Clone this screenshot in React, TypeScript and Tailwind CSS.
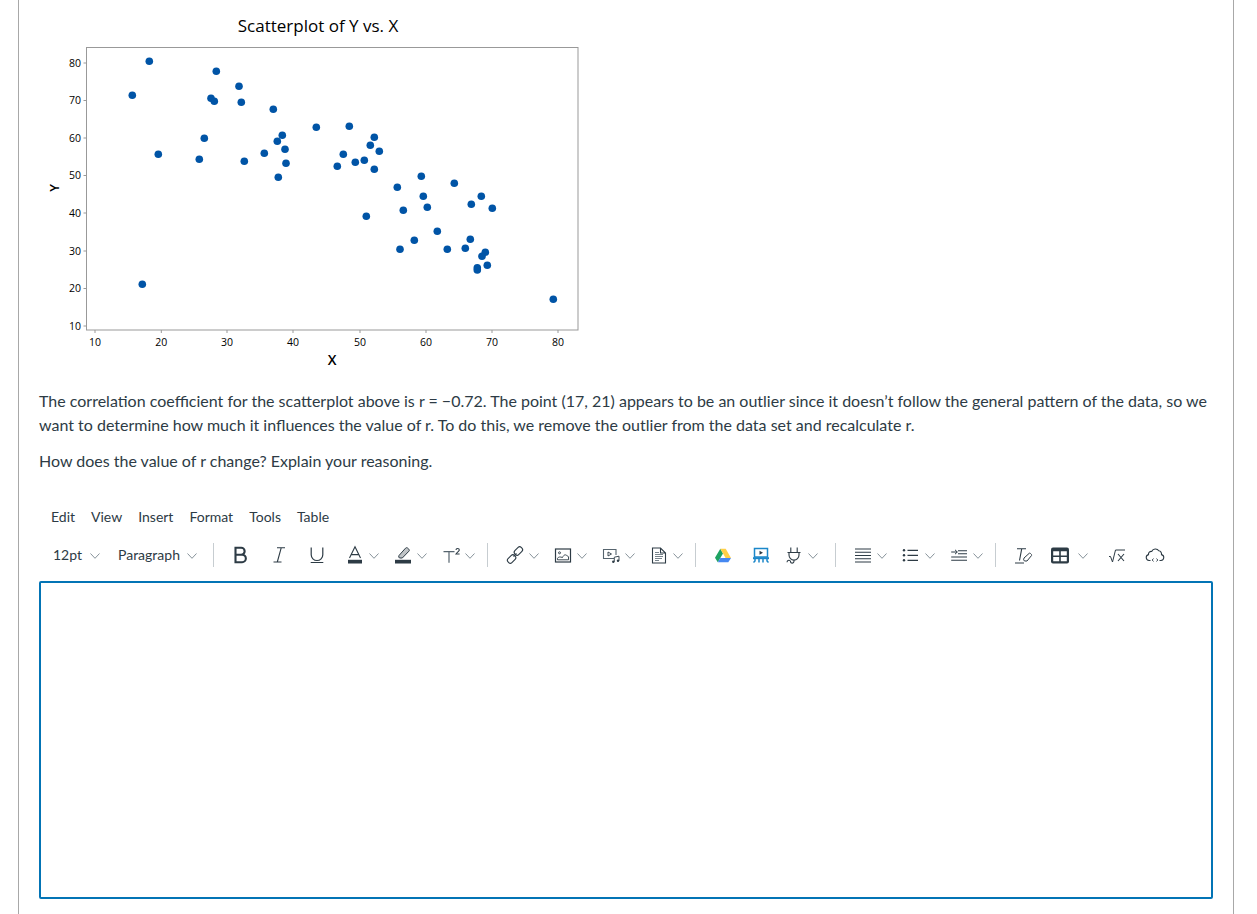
import React from 'react';

// pixel positions of the scatter points, read off the plot
const POINTS: [number, number][] = [
  [149.3, 61.3], [132.3, 95.3], [216.3, 71.3], [239, 86.3], [211, 98.3], [214.3, 101.3], [241.3, 102.3],
  [273.3, 109.3], [316.3, 127.3], [282.3, 135.3], [277.3, 141.3], [285, 149.3], [286, 163.3], [264.3, 153.3],
  [244.3, 161.3], [204.3, 138.3], [158.3, 154.3], [199.3, 159.3], [278.3, 177.3], [142.3, 284.3],
  [349.3, 126.3], [374.3, 137.3], [370.3, 145.3], [379.3, 151.3], [343.3, 154.3], [355.3, 162.3], [364.3, 160.3],
  [337.3, 166.3], [374.3, 169.3], [421.3, 176.3], [397.3, 187.3], [454.3, 183.3], [423.3, 196.3], [481.3, 196.3],
  [471.3, 204.3], [492.3, 208.3], [427.3, 207.3], [403.3, 210.3], [366.3, 216.3],
  [400, 249.3], [414.3, 240.3], [437.3, 231.3], [447.3, 249.3], [465.3, 248.3], [470.3, 239.3], [485.3, 252.3],
  [482, 256.3], [487.3, 265.3], [477.3, 267.7], [477.3, 270], [553.3, 299.3],
];

const Y_TICKS: [string, number][] = [['80', 63], ['70', 100.5], ['60', 138], ['50', 175.5], ['40', 213], ['30', 251], ['20', 288.5], ['10', 326]];
const X_TICKS: [string, number][] = [['10', 95], ['20', 161.3], ['30', 227], ['40', 293], ['50', 360], ['60', 426], ['70', 492], ['80', 558]];

const Scatterplot = () => (
  <svg viewBox="39 0 560 389" className="block h-[389px] w-[560px] font-['Open_Sans',sans-serif]">
    <text x="318" y="32" textAnchor="middle" fontSize="17" fontWeight="500" fill="#000">Scatterplot of Y vs. X</text>
    <rect x="86.5" y="47.5" width="491.5" height="282.5" fill="none" stroke="#999" />
    {Y_TICKS.map(([label, y]) => (
      <g key={label}>
        <line x1="83.5" x2="86.5" y1={y} y2={y} stroke="#999" />
        <text x="81" y={y + 3.5} textAnchor="end" fontSize="10.5" fontWeight="500" fill="#000">{label}</text>
      </g>
    ))}
    {X_TICKS.map(([label, x]) => (
      <g key={label}>
        <line x1={x} x2={x} y1="330" y2="333" stroke="#999" />
        <text x={x} y="346" textAnchor="middle" fontSize="10.5" fontWeight="500" fill="#000">{label}</text>
      </g>
    ))}
    <text x="332" y="365" textAnchor="middle" fontSize="14" fontWeight="600" fill="#000">X</text>
    <text x="0" y="0" textAnchor="middle" fontSize="13" fontWeight="600" fill="#000" transform="translate(59 188) rotate(-90)">Y</text>
    {POINTS.map(([x, y], i) => <circle key={i} cx={x} cy={y} r="3.8" fill="#0054a6" />)}
  </svg>
);

const Ico: React.FC<{ children: React.ReactNode }> = ({ children }) => (
  <svg viewBox="0 0 20 20" className="h-5 w-5 text-[#2d3b45]" fill="none" stroke="currentColor" strokeWidth="1.2">
    {children}
  </svg>
);

const Chevron: React.FC<{ className?: string }> = ({ className = '-ml-[5px]' }) => (
  <svg viewBox="0 0 10 6" className={`mt-px h-[6px] w-[10px] shrink-0 ${className}`} fill="none" stroke="#87929a" strokeWidth="1">
    <path d="M.5.5 5 5.3 9.5.5" />
  </svg>
);

const Btn: React.FC<{ children: React.ReactNode; chevron?: boolean }> = ({ children, chevron = true }) => (
  <div className={`flex h-full shrink-0 items-center ${chevron ? 'w-12' : 'w-[38px]'}`}>
    <div className="flex w-[38px] shrink-0 justify-center">{children}</div>
    {chevron && <Chevron />}
  </div>
);

const Sep = () => <div className="ml-[7px] mr-2 h-6 w-px shrink-0 bg-[#c7cdd1]" />;

const MENU = ['Edit', 'View', 'Insert', 'Format', 'Tools', 'Table'];

const Toolbar = () => (
  <div className="flex h-[38px] items-center pl-[14px] text-sm text-[#2d3b45]">
    <div className="flex h-full w-[65px] items-center">
      <span>12pt</span>
      <Chevron className="ml-[8px]" />
    </div>
    <div className="flex h-full w-[88px] items-center">
      <span>Paragraph</span>
      <Chevron className="ml-[7px]" />
    </div>
    <Sep />

    <Btn chevron={false}>
      <Ico><path d="M4.5 9.7V2.8h5.7a3.4 3.4 0 0 1 0 6.9H4.5Zm0 0v7.5h6.6a3.75 3.75 0 0 0 0-7.5" strokeWidth="2.1" /></Ico>
    </Btn>
    <Btn chevron={false}>
      <Ico><path d="M8 2.8h8M4.5 17h8M12.2 2.8 8.3 17" strokeWidth="1.1" /></Ico>
    </Btn>
    <Btn chevron={false}>
      <Ico><path d="M4.2 2.5v7.2a5.8 5.8 0 0 0 11.6 0V2.5M3.7 17.5h12.6" strokeWidth="1.2" /></Ico>
    </Btn>
    <Btn>
      <Ico>
        <path d="M4.5 13 10 1.8 15.5 13M6.3 9.6h7.4" strokeWidth="1.1" />
        <rect x="3" y="14.8" width="14" height="3.7" fill="currentColor" stroke="none" />
      </Ico>
    </Btn>
    <Btn>
      <Ico>
        <path d="M6 10.5 12.5 3.2c.7-.7 1.5-.7 2.1-.1l1.2 1.1c.7.6.7 1.4.1 2L9.3 13H6.5L5.7 12Z" fill="currentColor" fillOpacity=".3" strokeWidth="1" />
        <rect x="2" y="14.8" width="16" height="3.7" fill="currentColor" stroke="none" />
      </Ico>
    </Btn>
    <Btn>
      <Ico>
        <path d="M2.5 6.700h11M8 6.700v11" stroke="#56646e" />
        <path d="M15 5c0-2 3.300-2 3.300 0 0 1.300-2 2-3.300 4h3.600" strokeWidth="1.1" />
      </Ico>
    </Btn>
    <Sep />

    <Btn>
      <Ico>
        <rect x="10.700" y="1.500" width="5.400" height="9" rx="2.200" transform="rotate(45 13.400 6)" strokeWidth="1.1" />
        <rect x="3.900" y="9.500" width="5.400" height="9" rx="2.200" transform="rotate(45 6.600 14)" strokeWidth="1.1" />
        <path d="m8.500 11.500 3-3" strokeWidth="1.1" />
      </Ico>
    </Btn>
    <Btn>
      <Ico>
        <rect x="2.500" y="4" width="15" height="13" strokeWidth="1.2" />
        <circle cx="6.500" cy="7.800" r="1" strokeWidth=".9" />
        <path d="M4.500 14.800v-1.500c1-1.600 2.500-1.600 5-.8 1.200-2.800 2.800-3 3.800-2.300l2.200 1.500v3.100Z" strokeWidth=".9" />
      </Ico>
    </Btn>
    <Btn>
      <Ico>
        <path d="M13 13.500H2.500V4.500H15V10" stroke="#56646e" strokeWidth="1.1" />
        <path d="m7 7 3.500 2L7 11Z" strokeWidth=".9" />
        <circle cx="12.300" cy="16.800" r="1.200" fill="currentColor" stroke="none" />
        <circle cx="17" cy="15.800" r="1.200" fill="currentColor" stroke="none" />
        <path d="M13.300 16.800v-4.600l4.700-1v4.600" strokeWidth=".9" />
      </Ico>
    </Btn>
    <Btn>
      <Ico>
        <path d="M3.500 3h8l5 5v10h-13ZM11.500 3v5h5" strokeWidth="1.1" />
        <path d="M6 7.500h4M6 9.500h8M6 11.500h8M6 13.500h7M6 15.500h4" stroke="#78848c" strokeWidth="1.1" />
      </Ico>
    </Btn>
    <Sep />

    <Btn chevron={false}>
      <Ico>
        <path d="M7.300 3.800 10 8.400 4.800 17.200 2 12.800Z" fill="#1ea362" stroke="none" />
        <path d="M7.300 3.800h5.400l5.300 9.200h-5.400Z" fill="#ffcf48" stroke="none" />
        <path d="M7.300 13H18l-2.700 4.200H4.800Z" fill="#4688f1" stroke="none" />
      </Ico>
    </Btn>
    <Btn chevron={false}>
      <svg viewBox="0 0 20 20" className="h-5 w-5" fill="none" stroke="#1b87c9">
        <rect x="3.500" y="3.500" width="13" height="8.500" strokeWidth="1.5" />
        <path d="m8.500 5.800 3.500 2-3.500 2Z" fill="#2d3b45" stroke="none" />
        <path d="M2 13.200h16" strokeWidth="2" />
        <path d="M4 14v2l-1.500 1.500M8 14v3.500M12 14v3.500M16 14v2l1.500 1.500" strokeWidth="1.5" />
      </svg>
    </Btn>
    <div className="flex h-full w-12 shrink-0 items-center">
      <div className="-ml-[5px] flex w-[38px] shrink-0 justify-center">
        <Ico>
          <path d="M6.800 2.500v5M13.200 2.500v5M3.500 7.500h13M5 7.500v2.600a5 5 0 0 0 10 0V7.500M10 15v1.200c0 2.500-3.500 2.500-3.500.4 0-1.800-3.500-1.800-3.500.6" strokeWidth="1.1" />
        </Ico>
      </div>
      <Chevron />
    </div>
    <Sep />

    <Btn>
      <Ico><path d="M2 4h16M2 7.300h16M2 10.500h16M2 13.800h16M2 17h16" strokeWidth="1.1" /></Ico>
    </Btn>
    <Btn>
      <Ico>
        <path d="M6.500 5.300H17M6.500 10.300H17M6.500 15.300H17" strokeWidth="1.2" />
        <circle cx="3" cy="5.300" r="1.200" fill="currentColor" stroke="none" />
        <circle cx="3" cy="10.300" r="1.200" fill="currentColor" stroke="none" />
        <circle cx="3" cy="15.300" r="1.200" fill="currentColor" stroke="none" />
      </Ico>
    </Btn>
    <Btn>
      <Ico>
        <path d="M9 5.800h9M9 8.800h9M2.200 12h15.800M2.200 15.200h15.800" strokeWidth="1.1" />
        <path d="M2.200 7h6M6 4.800 8.300 7 6 9.200" strokeWidth="1" />
      </Ico>
    </Btn>
    <Sep />

    <Btn chevron={false}>
      <Ico>
        <path d="M4 3.800h9M8.700 3.800 6.500 15.500M2 18h9" strokeWidth="1.1" />
        <path d="m11 13 5-4.500c.5-.5 1-.5 1.500 0l.8.8c.5.500.5 1 0 1.500L14 16h-2.500l-.9-1.200Z" strokeWidth="1" />
      </Ico>
    </Btn>
    <div className="flex h-full w-[56px] shrink-0 items-center">
      <div className="-ml-px flex w-[38px] shrink-0 justify-center">
        <Ico>
          <rect x="1" y="2.500" width="18" height="16" rx="2" fill="currentColor" stroke="none" />
          <path d="M3.200 6.200h6v4.400h-6ZM10.800 6.200h6v4.400h-6ZM3.200 12h6v4.300h-6ZM10.800 12h6v4.300h-6Z" fill="#fff" stroke="none" />
        </Ico>
      </div>
      <Chevron className="ml-[-1px]" />
    </div>
    <div className="flex h-full w-[38px] shrink-0 items-center justify-center">
      <Ico>
        <path d="M2 11.500h1.500l2 5.500L8.500 5H18" strokeWidth="1" />
        <path d="m11 9 6 7M17 9l-6 7" strokeWidth="1.1" />
      </Ico>
    </div>
    <div className="flex h-full w-[38px] shrink-0 items-center justify-center">
      <Ico>
        <path d="M5.500 15.500H4A3 3 0 0 1 3.500 9.600 2.800 2.800 0 0 1 6.800 6.400 4 4 0 0 1 13.800 5.800 3.200 3.200 0 0 1 16.500 9.600 3 3 0 0 1 16 15.500H14.500" strokeWidth="1.1" />
        <path d="M8.500 13.500 7.200 15l1.300 1.500M11.500 13.500l1.300 1.500-1.300 1.500" strokeWidth=".9" />
      </Ico>
    </div>
  </div>
);

export default function App() {
  return (
    <div className="h-[914px] overflow-hidden bg-white font-['Lato',sans-serif] text-[#2d3b45]">
      <div className="ml-[18px] h-full w-[1216px] border-x border-[#a8a8a8] pl-5">
        <div className="w-[1174px]">
          <Scatterplot />
          <p className="text-base leading-6">
            The correlation coefficient for the scatterplot above is r = −0.72. The point (17, 21) appears to be an outlier since it doesn’t follow the general pattern of the data, so we want to determine how much it influences the value of r. To do this, we remove the outlier from the data set and recalculate r.
          </p>
          <p className="mt-3 text-base leading-6">How does the value of r change? Explain your reasoning.</p>

          <div className="mt-[25px] flex h-[38px] items-center gap-4 pl-3 text-sm">
            {MENU.map((item) => <span key={item}>{item}</span>)}
          </div>
          <Toolbar />
          <div className="mt-[7px] h-[318px] rounded-[2px] border-2 border-[#0374b5]" />
        </div>
      </div>
    </div>
  );
}
